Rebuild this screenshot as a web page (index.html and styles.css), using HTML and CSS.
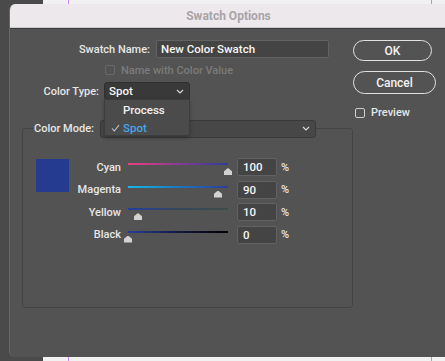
FILE: index.html
```html
<!DOCTYPE html>
<html>
<head>
<meta charset="utf-8">
<link rel="stylesheet" href="styles.css">
</head>
<body>
<div class="window">
  <div class="titlebar">Swatch Options</div>
  <div class="dialog">
    <div class="form">
      <div class="name-row">
        <label class="lbl name-lbl">Swatch Name:</label>
        <div class="text-input name-input">New Color Swatch</div>
      </div>
      <div class="check-row disabled">
        <span class="checkbox dim"></span>
        <span>Name with Color Value</span>
      </div>
      <div class="type-row">
        <label class="lbl type-lbl">Color Type:</label>
        <div class="select type-select">
          <span>Spot</span>
          <svg class="chev" width="8" height="5" viewBox="0 0 8 5"><polyline points="1,1 4,4 7,1" fill="none" stroke="#d8d8d8" stroke-width="1.2"/></svg>
        </div>
      </div>
      <div class="panel">
        <div class="legend">
          <label class="lbl mode-lbl">Color Mode:</label>
          <div class="select mode-select">
            <span></span>
            <svg class="chev" width="8" height="5" viewBox="0 0 8 5"><polyline points="1,1 4,4 7,1" fill="none" stroke="#d8d8d8" stroke-width="1.2"/></svg>
          </div>
        </div>
        <div class="mix">
          <div class="swatch"></div>
          <div class="sliders">
            <div class="srow">
              <span class="slbl">Cyan</span>
              <div class="slider"><div class="track cyan"></div><div class="thumb" style="left: 100%"></div></div>
              <div class="text-input num">100</div>
              <span class="pct">%</span>
            </div>
            <div class="srow">
              <span class="slbl">Magenta</span>
              <div class="slider"><div class="track magenta"></div><div class="thumb" style="left: 90%"></div></div>
              <div class="text-input num">90</div>
              <span class="pct">%</span>
            </div>
            <div class="srow">
              <span class="slbl">Yellow</span>
              <div class="slider"><div class="track yellow"></div><div class="thumb" style="left: 10%"></div></div>
              <div class="text-input num">10</div>
              <span class="pct">%</span>
            </div>
            <div class="srow">
              <span class="slbl">Black</span>
              <div class="slider"><div class="track black"></div><div class="thumb" style="left: 0%"></div></div>
              <div class="text-input num">0</div>
              <span class="pct">%</span>
            </div>
          </div>
        </div>
      </div>
    </div>
    <div class="actions">
      <button class="btn ok">OK</button>
      <button class="btn cancel">Cancel</button>
      <div class="preview">
        <span class="checkbox"></span>
        <span>Preview</span>
      </div>
    </div>
    <div class="menu">
      <div class="item">Process</div>
      <div class="item selected"><svg class="tick" width="9" height="8" viewBox="0 0 9 8"><polyline points="1,4.5 3.3,7 8,1" fill="none" stroke="#c9c9c9" stroke-width="1.1"/></svg>Spot</div>
    </div>
  </div>
</div>
</body>
</html>
```
FILE: styles.css
```css
html, body {
  margin: 0;
  padding: 0;
}
body {
  width: 445px;
  height: 361px;
  overflow: hidden;
  font-family: Roboto, "Liberation Sans", sans-serif;
  font-size: 11px;
  font-weight: 500;
  color: #e6e6e6;
  background:
    linear-gradient(to right,
      #4a4a4a 0 43px,
      #f1f1f1 43px 68px,
      #c28af2 68px 69px,
      #f1f1f1 69px 431px,
      #c28af2 431px 432px,
      #f1f1f1 432px);
}
.window {
  margin: 4px 0 0 9px;
  width: 450px;
  height: 353px;
  background: #535353;
  border-left: 1px solid #686868;
  border-radius: 6px 0 0 6px;
  overflow: hidden;
  box-sizing: border-box;
}
.titlebar {
  height: 23px;
  background: #ece8ec;
  border-bottom: 1px solid #cfcbcf;
  text-align: center;
  line-height: 24px;
  font-weight: bold;
  font-size: 12px;
  color: #a8a4a8;
  padding-right: 12px;
}
.dialog {
  position: relative;
  display: flex;
  border-top: 1px solid #3c3c3c;
  height: 328px;
}
.form {
  width: 343px;
  flex: none;
}
.lbl {
  text-align: right;
  flex: none;
}
.text-input {
  box-sizing: border-box;
  background: #444444;
  border: 1px solid #626262;
  border-radius: 2px;
  color: #f6f6f6;
  height: 18px;
  line-height: 16px;
  padding-left: 4px;
  font-size: 11.5px;
}
.name-row {
  display: flex;
  align-items: center;
  margin-top: 11px;
  height: 18px;
}
.name-lbl {
  width: 140px;
  margin-right: 6px;
}
.name-input {
  width: 173px;
}
.checkbox {
  box-sizing: border-box;
  width: 10px;
  height: 10px;
  border: 1px solid #cfcfcf;
  border-radius: 2px;
  flex: none;
}
.checkbox.dim {
  border-color: #696969;
}
.check-row {
  display: flex;
  align-items: center;
  gap: 6px;
  margin-top: 5px;
  height: 14px;
  padding-left: 95px;
}
.check-row.disabled {
  color: #7b7b7b;
}
.type-row {
  display: flex;
  align-items: center;
  margin-top: 5px;
  height: 18px;
}
.type-lbl {
  width: 89px;
  margin-right: 5px;
}
.select {
  box-sizing: border-box;
  height: 18px;
  border-radius: 3px;
  display: flex;
  align-items: center;
  justify-content: space-between;
  padding: 0 5px 0 4px;
  color: #f6f6f6;
  font-size: 11.5px;
}
.type-select {
  width: 86px;
  background: #393939;
  border: 1px solid #2f2f2f;
}
.chev {
  flex: none;
}
.panel {
  box-sizing: border-box;
  margin: 28px 0 0 12px;
  width: 331px;
  height: 180px;
  border: 1px solid #444444;
  border-radius: 3px;
}
.legend {
  display: flex;
  align-items: center;
  width: fit-content;
  margin: -10px 0 0 10px;
  background: #535353;
  height: 19px;
}
.mode-lbl {
  width: 63px;
  text-align: left;
  padding-left: 1px;
  margin-right: 3px;
}
.mode-select {
  width: 216px;
  background: #474747;
  border: 1px solid #393939;
}
.mix {
  display: flex;
  align-items: flex-start;
  margin: 20px 0 0 13px;
}
.swatch {
  width: 33px;
  height: 33px;
  margin-top: 1px;
  background: #253b8f;
  flex: none;
}
.sliders {
  display: flex;
  flex-direction: column;
  gap: 4.5px;
}
.srow {
  display: flex;
  align-items: center;
  height: 18px;
}
.slbl {
  width: 52px;
  text-align: right;
  margin-right: 7px;
}
.slider {
  position: relative;
  width: 100px;
  height: 18px;
  margin-right: 9px;
  flex: none;
}
.track {
  position: absolute;
  left: 0;
  right: 0;
  top: 5px;
  height: 2px;
}
.track.cyan { background: linear-gradient(to right, #ec3f7c, #8a3a96, #2c3d9b); }
.track.magenta { background: linear-gradient(to right, #16b8e6, #1c78c4, #2c3d9b); }
.track.yellow { background: linear-gradient(to right, #22409c, #34465e, #3e4d48); }
.track.black { background: linear-gradient(to right, #283c9c, #141a40, #000000); }
.thumb {
  position: absolute;
  top: 10px;
  width: 8px;
  height: 7px;
  margin-left: -4px;
  background: #d2d2d2;
  clip-path: polygon(50% 0, 100% 45%, 100% 100%, 0 100%, 0 45%);
}
.num {
  width: 40px;
  flex: none;
  padding-left: 5px;
}
.pct {
  margin-left: 4px;
}
.actions {
  display: flex;
  flex-direction: column;
  align-items: flex-start;
}
.btn {
  box-sizing: border-box;
  font-family: inherit;
  font-size: 12px;
  font-weight: 500;
  color: #f2f2f2;
  background: transparent;
  border: 1.5px solid #e2e2e2;
  border-radius: 11px;
  padding: 0;
}
.ok {
  margin-top: 11px;
  width: 79px;
  height: 21px;
}
.cancel {
  margin-top: 10px;
  width: 83px;
  height: 23px;
  border-radius: 12px;
}
.preview {
  display: flex;
  align-items: center;
  gap: 6px;
  margin: 12px 0 0 2px;
}
.menu {
  position: absolute;
  left: 94px;
  top: 70px;
  width: 86px;
  height: 37px;
  box-sizing: border-box;
  background: #4b4b4b;
  border: 1px solid #3d3d3d;
  border-radius: 0 0 3px 3px;
  box-shadow: 0 2px 4px rgba(0,0,0,0.25);
  padding-top: 1px;
}
.item {
  height: 18px;
  line-height: 18px;
  padding-left: 18px;
  position: relative;
  color: #f0f0f0;
  font-size: 11.5px;
}
.item.selected {
  color: #46a6ee;
}
.tick {
  position: absolute;
  left: 6px;
  top: 5px;
}
```
